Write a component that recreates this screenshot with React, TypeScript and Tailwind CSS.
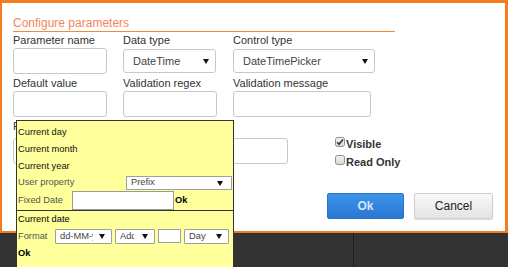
import React from 'react';

function Arrow({ className = '' }: { className?: string }) {
  return (
    <svg width="6" height="5" viewBox="0 0 6 5" className={className}>
      <path d="M0 0H6L3 5Z" fill="#111" />
    </svg>
  );
}

function Select({ value, width }: { value: string; width: string }) {
  return (
    <div className={`${width} mt-[2px] h-[24px] flex items-center pl-[9px] pr-[6px] border border-[#c8c8c8] rounded-[3px] bg-white`}>
      <span className="flex-1 text-[11px] text-[#444]">{value}</span>
      <Arrow />
    </div>
  );
}

function Field({ label, children }: { label: string; children: React.ReactNode }) {
  return (
    <div className="flex flex-col">
      <div className="text-[11px] leading-[13px] text-[#333]">{label}</div>
      {children}
    </div>
  );
}

function Input({ width }: { width: string }) {
  return <div className={`${width} mt-px h-[26px] border border-[#c8c8c8] rounded-[3px] bg-white`} />;
}

function MiniSelect({ value, width, clip }: { value: string; width: string; clip: string }) {
  return (
    <div className={`${width} h-[15px] flex items-center pl-[4px] pr-[6px] border border-[#a0a0a0] rounded-[1px] bg-white`}>
      <span className={`${clip} overflow-hidden whitespace-nowrap text-[#444]`}>{value}</span>
      <Arrow className="ml-auto" />
    </div>
  );
}

function Check({ checked }: { checked: boolean }) {
  return (
    <svg width="10" height="10" viewBox="0 0 10 10" className="mt-[2px] mr-px shrink-0">
      <defs>
        <linearGradient id={checked ? 'cg1' : 'cg2'} x1="0" y1="0" x2="0" y2="1">
          <stop offset="0" stopColor="#f4f4f4" />
          <stop offset="1" stopColor="#d8d8d8" />
        </linearGradient>
      </defs>
      <rect x="0.5" y="0.5" width="9" height="9" rx="2" fill={`url(#${checked ? 'cg1' : 'cg2'})`} stroke="#8f8f8f" />
      {checked && <path d="M2.2 5.2L4 7.2L8 2.4" fill="none" stroke="#333" strokeWidth="1.6" />}
    </svg>
  );
}

export default function App() {
  return (
    <div className="relative w-[508px] h-[267px] overflow-hidden bg-[#333333] font-['Liberation_Sans',Arial,sans-serif]">
      <div className="h-[233px] bg-white border-t-[3px] border-r-[3px] border-l-2 border-b-2 border-[#f47b20] pl-[11px]">
        <div className="w-[382px] pt-[12px] border-b border-[#f08a40] text-[12px] leading-[16px] text-[#f5845c]">
          Configure parameters
        </div>

        <div className="grid grid-cols-[110px_110px_1fr] mt-[2px]">
          <Field label="Parameter name"><Input width="w-[94px]" /></Field>
          <Field label="Data type"><Select value="DateTime" width="w-[93px]" /></Field>
          <Field label="Control type"><Select value="DateTimePicker" width="w-[142px]" /></Field>
        </div>

        <div className="grid grid-cols-[110px_110px_1fr] mt-[3px]">
          <Field label="Default value"><Input width="w-[94px]" /></Field>
          <Field label="Validation regex"><Input width="w-[94px]" /></Field>
          <Field label="Validation message"><Input width="w-[138px]" /></Field>
        </div>

        <div className="flex mt-[3px]">
          <div className="flex flex-col w-[275px]">
            <div className="text-[11px] leading-[13px] text-[#333]">Placeholder</div>
            <div className="mt-[5px] h-[26px] border border-[#c8c8c8] rounded-[3px] bg-white" />
          </div>
          <div className="ml-[47px] mt-[15px] flex flex-col text-[11px] font-bold text-[#333]">
            <label className="flex items-start leading-[18px]"><Check checked />Visible</label>
            <label className="flex items-start leading-[18px]"><Check checked={false} />Read Only</label>
          </div>
        </div>

        <div className="flex ml-[314px] mt-[22px] gap-[10px]">
          <button className="w-[77px] h-[26px] rounded-[2px] border border-[#2b74c8] bg-gradient-to-b from-[#3d93ea] to-[#2a78d4] text-[12px] font-bold text-[#d6e6f8]">
            Ok
          </button>
          <button className="w-[79px] h-[26px] rounded-[2px] border border-[#cfcfcf] bg-gradient-to-b from-[#f8f8f8] to-[#e4e4e4] text-[12px] text-[#222] shadow-[0_1px_1px_rgba(0,0,0,0.15)]">
            Cancel
          </button>
        </div>
      </div>

      <div className="flex h-[34px]">
        <div className="w-[354px] border-r border-[#1e1e1e]" />
        <div className="flex-1" />
      </div>

      {/* date source popup */}
      <div className="absolute left-[16px] top-[120px] w-[218px] h-[147px] border border-b-0 border-[#333] bg-[#ffff9c] text-[9.3px] text-[#111]">
        <div className="pl-px pt-[3px]">
          <div className="leading-[17px]">Current day</div>
          <div className="leading-[17px]">Current month</div>
          <div className="leading-[17px]">Current year</div>
          <div className="flex items-center h-[16px]">
            <span className="w-[108px] text-[#555]">User property</span>
            <div className="w-[106px] h-[14px] flex items-center pl-[4px] pr-[8px] border border-[#a0a0a0] bg-white">
              <span className="flex-1 text-[#444]">Prefix</span>
              <Arrow />
            </div>
          </div>
          <div className="flex items-center h-[19px]">
            <span className="w-[54px] text-[#555]">Fixed Date</span>
            <div className="w-[102px] h-[19px] border border-[#9a9a9a] bg-white" />
            <span className="ml-px font-bold text-black">Ok</span>
          </div>
        </div>
        <div className="border-t border-[#333] pl-px">
          <div className="leading-[17px] text-black">Current date</div>
          <div className="flex items-center h-[17px] gap-[3px]">
            <span className="w-[34px] text-[#555]">Format</span>
            <MiniSelect value="dd-MM-yyyy" width="w-[57px]" clip="w-[33px]" />
            <MiniSelect value="Add" width="w-[40px]" clip="w-[14px]" />
            <div className="w-[23px] h-[14px] -mt-[2px] border border-[#a0a0a0] bg-white" />
            <MiniSelect value="Days" width="w-[45px]" clip="w-[17px]" />
          </div>
          <div className="leading-[17px] font-bold text-black">Ok</div>
        </div>
      </div>
    </div>
  );
}
